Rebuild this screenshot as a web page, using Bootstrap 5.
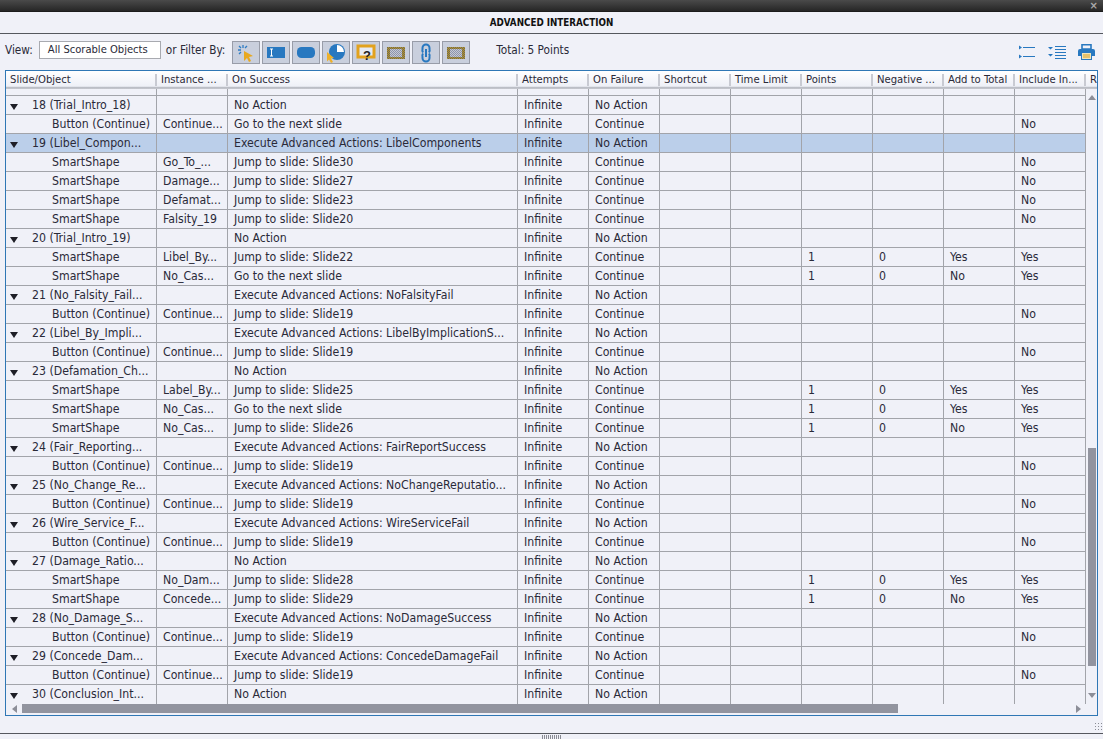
<!DOCTYPE html>
<html lang="en"><head><meta charset="utf-8"><title>Advanced Interaction</title>
<link href="https://cdn.jsdelivr.net/npm/bootstrap@5.3.0/dist/css/bootstrap.min.css" rel="stylesheet">
<style>
html,body{height:739px;overflow:hidden}
body{background:#f0f1f8;color:#2a2a38;font:11.7px/1 "DejaVu Sans Condensed","DejaVu Sans",sans-serif}
.topstrip{height:12px;background:linear-gradient(#4a4a4a,#262626);color:#aaa;border-bottom:1px solid #1c1c1c}
.topstrip span{font:bold 10px/10px "DejaVu Sans",sans-serif;padding-right:5px}
.titlebar{height:22px;font:bold 9.75px/21px "DejaVu Sans Condensed",sans-serif;color:#111;border-bottom:1px solid #55585e}
.toolrow{height:36px;padding:7px 5px 0 5px}
.viewbox{width:122px;height:18px;background:#fff;border:1px solid #a8aab0;margin:0 5px 0 6px;padding-left:8px;line-height:15px;font-size:11.1px}
.filt{width:28px;height:23px;background:#c9cfdd;border:1px solid #989ca8;margin-right:2px}
.rightset{gap:12px;margin-top:3px;margin-right:3px}
.rightset svg:first-child{margin-right:1px}
.filterlabel{margin-right:7px}
.totaltext{margin-left:24px}
.gridbox{height:646px;border:1px solid #2f77b5;margin:0 5px}
.headcells{height:18px;background:linear-gradient(#fff,#eef0f7 85%,#b9bcc4 90%,#c6c8ce)}
.headcell{flex:0 0 auto;height:17px;padding-left:4px;line-height:17px;white-space:nowrap;overflow:hidden;position:relative;font-size:11.2px}
.headcell::after{content:"";position:absolute;right:0;top:3px;width:2px;height:12px;background:#c8cad2}
.midpart{height:615px}
.sheet.table{--bs-table-bg:transparent;table-layout:fixed;width:1080px;flex:0 0 1080px;margin:0;border-collapse:separate;border-spacing:0;color:#2a2a38;font-size:12.2px}
.sheet.table td{height:19px;padding:0 0 0 6px;border:0 solid #a2a4aa;border-width:0 1px 1px 0;white-space:nowrap;overflow:hidden;line-height:18px;box-shadow:none;color:#2a2a38}
.sheet.table tr.stub td{height:7px;line-height:6px}
.sheet.table tr.final td{border-bottom:0}
.sheet.table tr.picked td{background:#bbcfea}
.sheet.table td.node{padding-left:26px;position:relative}
.sheet.table td.kid{padding-left:46px}
.arrowdown{position:absolute;left:4px;top:8px;border:4px solid transparent;border-top:6px solid #1e1e26;border-bottom:0}
.vbar{width:12px;margin-left:auto;padding:0 1px 0 2px}
.vup,.vdn{height:0;width:0;border:4px solid transparent;margin:0 auto}
.vup{border-bottom:5px solid #8c8e98;border-top:0;margin-top:6px}
.vdn{border-top:5px solid #8c8e98;border-bottom:0}
.vgap{height:348px}
.vthumb{height:218px;background:#92949f}
.vgap2{height:27px}
.hbar{height:10px}
.hleft,.hright{width:0;height:0;border:4px solid transparent;margin-top:1px}
.hleft{border-right:5px solid #8c8e98;border-left:0;margin-left:6px}
.hright{border-left:5px solid #8c8e98;border-right:0;margin-left:178px}
.hthumb{width:876px;height:9px;background:#92949f;margin-left:5px}
.bottomline{margin-top:2px;height:6px;border-top:1px solid #55585e}
.bottomgrip{width:20px;height:4px;margin-top:1px;background:repeating-linear-gradient(90deg,#8a8c94 0 1px,transparent 1px 2px)}
.cornergrip{width:9px;height:9px;margin:6px 0 0 auto;background:radial-gradient(circle,#8a8c94 35%,transparent 40%) 0 0/3px 3px}
.iconset svg{display:block}
</style></head>
<body>
<svg width="0" height="0" class="position-absolute" aria-hidden="true"><defs>
<pattern id="ditherframe" width="2" height="2" patternUnits="userSpaceOnUse"><rect width="2" height="2" fill="#b7952f"/><rect width="1" height="1" fill="#6f6a52"/><rect x="1" y="1" width="1" height="1" fill="#6f6a52"/></pattern>
<pattern id="dithercore" width="2" height="2" patternUnits="userSpaceOnUse"><rect width="2" height="2" fill="#c3c8d6"/><rect width="1" height="1" fill="#8f95a8"/><rect x="1" y="1" width="1" height="1" fill="#8f95a8"/></pattern>
</defs></svg>
<div class="topstrip d-flex justify-content-end align-items-center"><span>×</span></div>
<div class="titlebar text-center">ADVANCED INTERACTION</div>
<div class="toolrow d-flex align-items-start">
  <span class="pt-1">View:</span>
  <div class="viewbox">All Scorable Objects</div>
  <span class="pt-1 filterlabel">or Filter By:</span>
  <div class="iconset d-flex">
    <div class="filt d-flex align-items-center justify-content-center"><svg width="20" height="20" viewBox="0 0 20 20"><path d="M8 8l9 5-4 1 2 4-2 1-2-4-3 3z" fill="#e8a81f"/><path d="M7 2v3M2 7h3M3 3l2 2M11 3L9 5M3 11l2-2" stroke="#2e7cc4" stroke-width="1.3"/></svg></div>
    <div class="filt d-flex align-items-center justify-content-center"><svg width="20" height="13" viewBox="0 0 20 13"><rect x="1" y="1" width="18" height="11" fill="#2878c0"/><path d="M4 3h3M4 10h3M5.500 3v7" stroke="#fff" stroke-width="1"/></svg></div>
    <div class="filt d-flex align-items-center justify-content-center"><svg width="20" height="13" viewBox="0 0 20 13"><rect x="1" y="1" width="18" height="11" rx="4.500" fill="#2878c0"/></svg></div>
    <div class="filt d-flex align-items-center justify-content-center"><svg width="22" height="20" viewBox="0 0 22 20"><circle cx="12" cy="9" r="8" fill="#2878c0"/><path d="M12 9V2a7 7 0 0 1 7 7z" fill="#fff"/><path d="M2 9l7 6-3 .5 2 3.500-2 1-2-3.500-2 2z" fill="#eeb02a"/></svg></div>
    <div class="filt d-flex align-items-center justify-content-center"><svg width="20" height="18" viewBox="0 0 20 18"><rect x="2" y="2" width="16" height="11" fill="#e6eaf4" stroke="#e2a21e" stroke-width="3"/><text x="11" y="15.500" font-family="Liberation Sans,sans-serif" font-size="13" font-weight="700" fill="#222" text-anchor="middle">?</text></svg></div>
    <div class="filt d-flex align-items-center justify-content-center"><svg width="20" height="14" viewBox="0 0 20 14"><rect x="1" y="1" width="18" height="12" fill="url(#ditherframe)"/><rect x="4" y="3" width="12" height="8" fill="url(#dithercore)"/></svg></div>
    <div class="filt d-flex align-items-center justify-content-center"><svg width="14" height="20" viewBox="0 0 14 20"><path d="M4 9.500A4 4 0 0 1 3.500 6V5a3.500 3.500 0 0 1 7 0v1a4 4 0 0 1-.5 3.500M4 10.500A4 4 0 0 0 3.500 14v1a3.500 3.500 0 0 0 7 0v-1a4 4 0 0 0-.5-3.500M7 6v8" fill="none" stroke="#2878c0" stroke-width="2"/></svg></div>
    <div class="filt d-flex align-items-center justify-content-center"><svg width="20" height="14" viewBox="0 0 20 14"><rect x="1" y="1" width="18" height="12" fill="url(#ditherframe)"/><rect x="4" y="3" width="12" height="8" fill="url(#dithercore)"/></svg></div>
  </div>
  <span class="pt-1 totaltext">Total: 5 Points</span>
  <div class="iconset rightset d-flex align-items-center ms-auto">
    <svg width="16" height="14" viewBox="0 0 16 14"><path d="M4 2.500h12M4 11.500h12" stroke="#2878c0" stroke-width="1.200"/><path d="M0 .5l3 2-3 2zM0 9.500l3 2-3 2z" fill="#2878c0"/></svg>
    <svg width="18" height="13" viewBox="0 0 18 13"><path d="M7 .5h11M7 3.500h11M7 6.500h11M7 9.500h11M7 12.500h11" stroke="#2878c0"/><path d="M0 1h5L2.500 3.500zM0 8h5L2.500 10.500z" fill="#2878c0"/></svg>
    <svg width="17" height="16" viewBox="0 0 17 16"><path d="M4 .8h9V5H4z" fill="#f0f1f8" stroke="#2878c0" stroke-width="1.600"/><path d="M2 5h13a2 2 0 0 1 2 2v5h-3v4H3v-4H0V7a2 2 0 0 1 2-2z" fill="#2878c0"/><rect x="4" y="9" width="9" height="6" fill="#f0e4b8"/><path d="M5 11h7M5 13h7" stroke="#d99f1e"/></svg>
  </div>
</div>
<div class="gridbox d-flex flex-column">
  <div class="headcells d-flex overflow-hidden">
    <div class="headcell" style="width:151px">Slide/Object</div>
    <div class="headcell" style="width:71px">Instance ...</div>
    <div class="headcell" style="width:290px">On Success</div>
    <div class="headcell" style="width:71px">Attempts</div>
    <div class="headcell" style="width:71px">On Failure</div>
    <div class="headcell" style="width:71px">Shortcut</div>
    <div class="headcell" style="width:71px">Time Limit</div>
    <div class="headcell" style="width:71px">Points</div>
    <div class="headcell" style="width:71px">Negative ...</div>
    <div class="headcell" style="width:71px">Add to Total</div>
    <div class="headcell" style="width:71px">Include In...</div>
    <div class="headcell" style="width:20px">R</div>
  </div>
  <div class="midpart d-flex">
    <table class="table sheet">
      <colgroup><col style="width:151px"><col style="width:71px"><col style="width:290px"><col span="8" style="width:71px"></colgroup>
      <tbody>
<tr class="stub"><td></td><td></td><td></td><td></td><td></td><td></td><td></td><td></td><td></td><td></td><td></td></tr>
<tr><td class="node"><i class="arrowdown"></i>18 (Trial_Intro_18)</td><td></td><td>No Action</td><td>Infinite</td><td>No Action</td><td></td><td></td><td></td><td></td><td></td><td></td></tr>
<tr><td class="kid">Button (Continue)</td><td>Continue...</td><td>Go to the next slide</td><td>Infinite</td><td>Continue</td><td></td><td></td><td></td><td></td><td></td><td>No</td></tr>
<tr class="picked"><td class="node"><i class="arrowdown"></i>19 (Libel_Compon...</td><td></td><td>Execute Advanced Actions: LibelComponents</td><td>Infinite</td><td>No Action</td><td></td><td></td><td></td><td></td><td></td><td></td></tr>
<tr><td class="kid">SmartShape</td><td>Go_To_...</td><td>Jump to slide: Slide30</td><td>Infinite</td><td>Continue</td><td></td><td></td><td></td><td></td><td></td><td>No</td></tr>
<tr><td class="kid">SmartShape</td><td>Damage...</td><td>Jump to slide: Slide27</td><td>Infinite</td><td>Continue</td><td></td><td></td><td></td><td></td><td></td><td>No</td></tr>
<tr><td class="kid">SmartShape</td><td>Defamat...</td><td>Jump to slide: Slide23</td><td>Infinite</td><td>Continue</td><td></td><td></td><td></td><td></td><td></td><td>No</td></tr>
<tr><td class="kid">SmartShape</td><td>Falsity_19</td><td>Jump to slide: Slide20</td><td>Infinite</td><td>Continue</td><td></td><td></td><td></td><td></td><td></td><td>No</td></tr>
<tr><td class="node"><i class="arrowdown"></i>20 (Trial_Intro_19)</td><td></td><td>No Action</td><td>Infinite</td><td>No Action</td><td></td><td></td><td></td><td></td><td></td><td></td></tr>
<tr><td class="kid">SmartShape</td><td>Libel_By...</td><td>Jump to slide: Slide22</td><td>Infinite</td><td>Continue</td><td></td><td></td><td>1</td><td>0</td><td>Yes</td><td>Yes</td></tr>
<tr><td class="kid">SmartShape</td><td>No_Cas...</td><td>Go to the next slide</td><td>Infinite</td><td>Continue</td><td></td><td></td><td>1</td><td>0</td><td>No</td><td>Yes</td></tr>
<tr><td class="node"><i class="arrowdown"></i>21 (No_Falsity_Fail...</td><td></td><td>Execute Advanced Actions: NoFalsityFail</td><td>Infinite</td><td>No Action</td><td></td><td></td><td></td><td></td><td></td><td></td></tr>
<tr><td class="kid">Button (Continue)</td><td>Continue...</td><td>Jump to slide: Slide19</td><td>Infinite</td><td>Continue</td><td></td><td></td><td></td><td></td><td></td><td>No</td></tr>
<tr><td class="node"><i class="arrowdown"></i>22 (Libel_By_Impli...</td><td></td><td>Execute Advanced Actions: LibelByImplicationS...</td><td>Infinite</td><td>No Action</td><td></td><td></td><td></td><td></td><td></td><td></td></tr>
<tr><td class="kid">Button (Continue)</td><td>Continue...</td><td>Jump to slide: Slide19</td><td>Infinite</td><td>Continue</td><td></td><td></td><td></td><td></td><td></td><td>No</td></tr>
<tr><td class="node"><i class="arrowdown"></i>23 (Defamation_Ch...</td><td></td><td>No Action</td><td>Infinite</td><td>No Action</td><td></td><td></td><td></td><td></td><td></td><td></td></tr>
<tr><td class="kid">SmartShape</td><td>Label_By...</td><td>Jump to slide: Slide25</td><td>Infinite</td><td>Continue</td><td></td><td></td><td>1</td><td>0</td><td>Yes</td><td>Yes</td></tr>
<tr><td class="kid">SmartShape</td><td>No_Cas...</td><td>Go to the next slide</td><td>Infinite</td><td>Continue</td><td></td><td></td><td>1</td><td>0</td><td>Yes</td><td>Yes</td></tr>
<tr><td class="kid">SmartShape</td><td>No_Cas...</td><td>Jump to slide: Slide26</td><td>Infinite</td><td>Continue</td><td></td><td></td><td>1</td><td>0</td><td>No</td><td>Yes</td></tr>
<tr><td class="node"><i class="arrowdown"></i>24 (Fair_Reporting...</td><td></td><td>Execute Advanced Actions: FairReportSuccess</td><td>Infinite</td><td>No Action</td><td></td><td></td><td></td><td></td><td></td><td></td></tr>
<tr><td class="kid">Button (Continue)</td><td>Continue...</td><td>Jump to slide: Slide19</td><td>Infinite</td><td>Continue</td><td></td><td></td><td></td><td></td><td></td><td>No</td></tr>
<tr><td class="node"><i class="arrowdown"></i>25 (No_Change_Re...</td><td></td><td>Execute Advanced Actions: NoChangeReputatio...</td><td>Infinite</td><td>No Action</td><td></td><td></td><td></td><td></td><td></td><td></td></tr>
<tr><td class="kid">Button (Continue)</td><td>Continue...</td><td>Jump to slide: Slide19</td><td>Infinite</td><td>Continue</td><td></td><td></td><td></td><td></td><td></td><td>No</td></tr>
<tr><td class="node"><i class="arrowdown"></i>26 (Wire_Service_F...</td><td></td><td>Execute Advanced Actions: WireServiceFail</td><td>Infinite</td><td>No Action</td><td></td><td></td><td></td><td></td><td></td><td></td></tr>
<tr><td class="kid">Button (Continue)</td><td>Continue...</td><td>Jump to slide: Slide19</td><td>Infinite</td><td>Continue</td><td></td><td></td><td></td><td></td><td></td><td>No</td></tr>
<tr><td class="node"><i class="arrowdown"></i>27 (Damage_Ratio...</td><td></td><td>No Action</td><td>Infinite</td><td>No Action</td><td></td><td></td><td></td><td></td><td></td><td></td></tr>
<tr><td class="kid">SmartShape</td><td>No_Dam...</td><td>Jump to slide: Slide28</td><td>Infinite</td><td>Continue</td><td></td><td></td><td>1</td><td>0</td><td>Yes</td><td>Yes</td></tr>
<tr><td class="kid">SmartShape</td><td>Concede...</td><td>Jump to slide: Slide29</td><td>Infinite</td><td>Continue</td><td></td><td></td><td>1</td><td>0</td><td>No</td><td>Yes</td></tr>
<tr><td class="node"><i class="arrowdown"></i>28 (No_Damage_S...</td><td></td><td>Execute Advanced Actions: NoDamageSuccess</td><td>Infinite</td><td>No Action</td><td></td><td></td><td></td><td></td><td></td><td></td></tr>
<tr><td class="kid">Button (Continue)</td><td>Continue...</td><td>Jump to slide: Slide19</td><td>Infinite</td><td>Continue</td><td></td><td></td><td></td><td></td><td></td><td>No</td></tr>
<tr><td class="node"><i class="arrowdown"></i>29 (Concede_Dam...</td><td></td><td>Execute Advanced Actions: ConcedeDamageFail</td><td>Infinite</td><td>No Action</td><td></td><td></td><td></td><td></td><td></td><td></td></tr>
<tr><td class="kid">Button (Continue)</td><td>Continue...</td><td>Jump to slide: Slide19</td><td>Infinite</td><td>Continue</td><td></td><td></td><td></td><td></td><td></td><td>No</td></tr>
<tr class="final"><td class="node"><i class="arrowdown"></i>30 (Conclusion_Int...</td><td></td><td>No Action</td><td>Infinite</td><td>No Action</td><td></td><td></td><td></td><td></td><td></td><td></td></tr>
      </tbody>
    </table>
    <div class="vbar d-flex flex-column">
      <div class="vup"></div><div class="vgap"></div><div class="vthumb"></div><div class="vgap2"></div><div class="vdn"></div>
    </div>
  </div>
  <div class="hbar d-flex">
    <div class="hleft"></div><div class="hthumb"></div><div class="hright"></div>
  </div>
</div>
<div class="cornergrip" aria-hidden="true"></div>
<div class="bottomline d-flex justify-content-center"><div class="bottomgrip"></div></div>
</body></html>
